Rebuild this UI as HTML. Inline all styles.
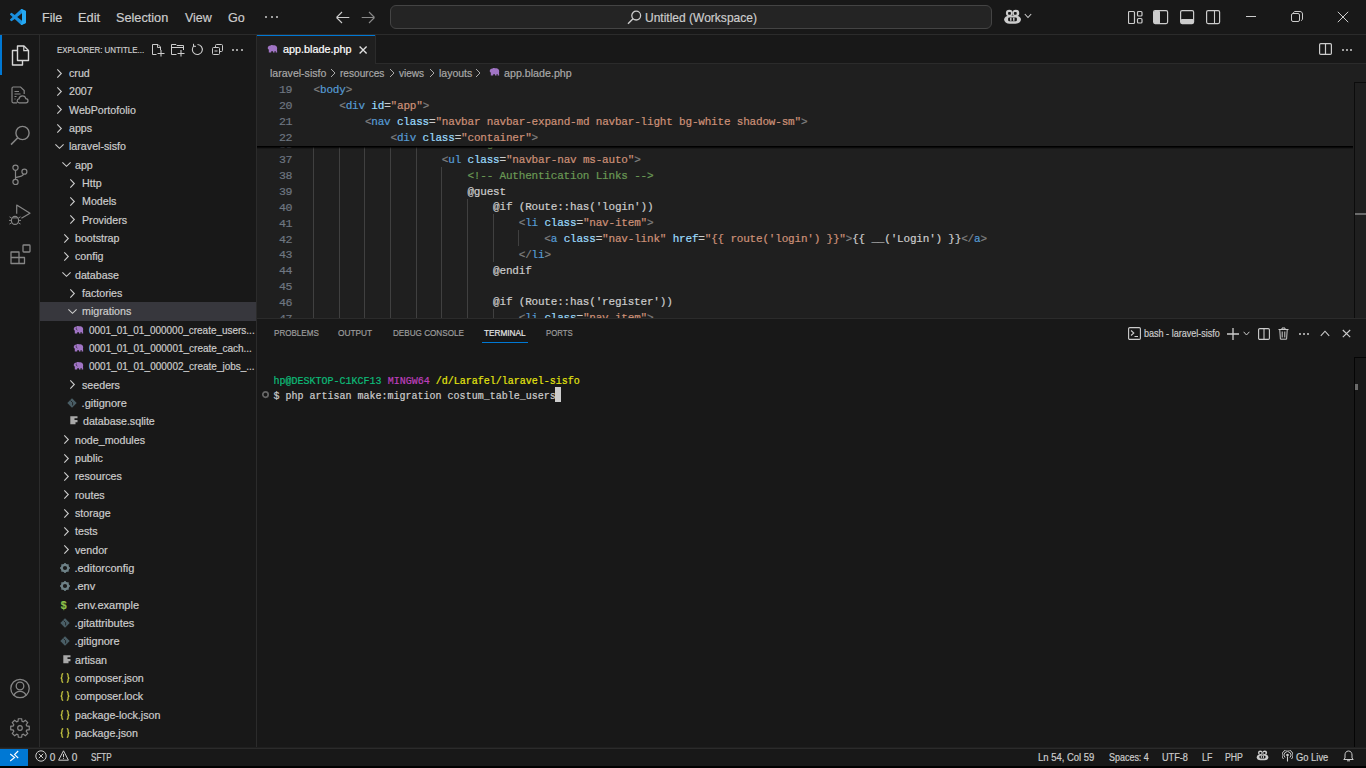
<!DOCTYPE html><html><head><meta charset="utf-8"><style>
html,body{margin:0;padding:0;width:1366px;height:768px;overflow:hidden;background:#181818;}
body>div,body>span,body>svg{position:absolute;display:block;}
span{white-space:pre;-webkit-text-stroke:0.2px currentColor;}
</style></head><body>
<div style="left:0px;top:0px;width:1366px;height:34px;background:#181818;"></div>
<div style="left:0px;top:34px;width:1366px;height:1px;background:#2b2b2b;"></div>
<svg style="left:10px;top:9px;" width="16" height="16" viewBox="0 0 100 100" fill="none"><path fill="#1a8fdd" d="M96.46 10.8L75.86.87a6.23 6.23 0 0 0-7.1 1.2L29.35 38.04 12.17 25a4.160 4.160 0 0 0-5.32.24L1.34 30.25a4.16 4.16 0 0 0 0 6.16L16.24 50 1.33 63.6a4.16 4.16 0 0 0 0 6.14l5.52 5.02a4.16 4.16 0 0 0 5.32.24l17.18-13.04L68.77 97.9a6.22 6.22 0 0 0 7.1 1.2l20.58-9.9a6.25 6.25 0 0 0 3.55-5.63V16.43a6.25 6.25 0 0 0-3.54-5.63zM75 72.72L45.1 50 75 27.28v45.44z"/><path fill="#25a9f2" d="M75.86.87a6.23 6.23 0 0 0-7.1 1.2L75 27.28v45.44L68.77 97.9a6.22 6.22 0 0 0 7.1 1.2l20.58-9.9a6.25 6.25 0 0 0 3.55-5.63V16.43a6.25 6.25 0 0 0-3.54-5.63z"/></svg>
<span style="left:42.33px;top:11.00px;font-size:13px;line-height:13px;color:#cccccc;font-family:'Liberation Sans', sans-serif;letter-spacing:0.000px;transform:scaleX(0.9687);transform-origin:0 0;">File</span>
<span style="left:77.51px;top:11.00px;font-size:13px;line-height:13px;color:#cccccc;font-family:'Liberation Sans', sans-serif;letter-spacing:0.000px;transform:scaleX(0.9867);transform-origin:0 0;">Edit</span>
<span style="left:116.00px;top:11.00px;font-size:13px;line-height:13px;color:#cccccc;font-family:'Liberation Sans', sans-serif;letter-spacing:0.000px;transform:scaleX(0.9765);transform-origin:0 0;">Selection</span>
<span style="left:184.60px;top:11.00px;font-size:13px;line-height:13px;color:#cccccc;font-family:'Liberation Sans', sans-serif;letter-spacing:0.000px;transform:scaleX(0.9596);transform-origin:0 0;">View</span>
<span style="left:227.80px;top:11.00px;font-size:13px;line-height:13px;color:#cccccc;font-family:'Liberation Sans', sans-serif;letter-spacing:0.000px;transform:scaleX(0.9642);transform-origin:0 0;">Go</span>
<div style="left:265.0px;top:16px;width:2.4px;height:2.4px;background:#cccccc;border-radius:50%;"></div>
<div style="left:270.5px;top:16px;width:2.4px;height:2.4px;background:#cccccc;border-radius:50%;"></div>
<div style="left:276.0px;top:16px;width:2.4px;height:2.4px;background:#cccccc;border-radius:50%;"></div>
<svg style="left:335px;top:10px;" width="15" height="15" viewBox="0 0 15 15" fill="none"><path d="M1.6 7.5 H14.3 M1.5 7.5 L7 2 M1.5 7.5 L7 13" stroke="#cccccc" stroke-width="1.1"/></svg>
<svg style="left:361px;top:10px;" width="15" height="15" viewBox="0 0 15 15" fill="none"><path d="M13.4 7.5 H0.7 M13.5 7.5 L8 2 M13.5 7.5 L8 13" stroke="#8a8a8a" stroke-width="1.1"/></svg>
<div style="left:390px;top:5px;width:602px;height:24px;background:#242424;box-sizing:border-box;border:1px solid #444444;border-radius:6px;"></div>
<svg style="left:627px;top:10px;" width="15" height="15" viewBox="0 0 15 15" fill="none"><circle cx="9.2" cy="5.6" r="4.4" stroke="#cccccc" stroke-width="1.3"/><path d="M6 8.8 L1 13.8" stroke="#cccccc" stroke-width="1.4"/></svg>
<span style="left:645.28px;top:10.70px;font-size:13px;line-height:13px;color:#cccccc;font-family:'Liberation Sans', sans-serif;letter-spacing:0.000px;transform:scaleX(0.9240);transform-origin:0 0;">Untitled (Workspace)</span>
<svg style="left:1003px;top:9px;" width="19" height="16" viewBox="0 0 19 16" fill="none"><ellipse cx="6.3" cy="4.1" rx="3.4" ry="3.3" fill="#cccccc"/><ellipse cx="12.85" cy="4.1" rx="3.4" ry="3.3" fill="#cccccc"/><rect x="1.1" y="6.4" width="16.9" height="8.4" rx="5.5" ry="4.2" fill="#cccccc"/><rect x="5.1" y="2.9" width="2.8" height="2.8" rx="0.8" fill="#181818"/><rect x="10.9" y="2.9" width="2.8" height="2.8" rx="0.8" fill="#181818"/><rect x="5.1" y="8.4" width="8.8" height="3.9" rx="1.2" fill="#181818"/><rect x="7.1" y="8.7" width="1.4" height="3.1" fill="#cccccc"/><rect x="10.1" y="8.7" width="1.4" height="3.1" fill="#cccccc"/></svg>
<svg style="left:1024px;top:13px;" width="8" height="6" viewBox="0 0 8 6" fill="none"><path d="M0.8 1 L4 4.5 L7.2 1" stroke="#cccccc" stroke-width="1.1"/></svg>
<svg style="left:1128px;top:10px;" width="15" height="15" viewBox="0 0 15 15" fill="none"><rect x="0.5" y="1.5" width="6" height="12" rx="1" stroke="#cccccc" stroke-width="1.2"/><rect x="9.5" y="1.5" width="4.5" height="4.5" rx="1" stroke="#cccccc" stroke-width="1.2"/><rect x="9.5" y="8.5" width="4.5" height="4.5" rx="1" stroke="#cccccc" stroke-width="1.2"/></svg>
<svg style="left:1153px;top:10px;" width="16" height="15" viewBox="0 0 16 15" fill="none"><rect x="0.6" y="0.6" width="14" height="13" rx="1.5" stroke="#cccccc" stroke-width="1.2"/><rect x="1" y="1" width="6" height="12.5" rx="0.8" fill="#cccccc"/></svg>
<svg style="left:1180px;top:10px;" width="15" height="15" viewBox="0 0 15 15" fill="none"><rect x="0.6" y="0.6" width="13" height="13" rx="1.5" stroke="#cccccc" stroke-width="1.2"/><rect x="1" y="9" width="12.5" height="4.5" rx="0.8" fill="#cccccc"/></svg>
<svg style="left:1206px;top:10px;" width="15" height="15" viewBox="0 0 15 15" fill="none"><rect x="0.6" y="0.6" width="13" height="13" rx="1.5" stroke="#cccccc" stroke-width="1.2"/><path d="M8.5 1 V13.5" stroke="#cccccc" stroke-width="1.1"/></svg>
<div style="left:1246px;top:16px;width:10px;height:1px;background:#cccccc;"></div>
<svg style="left:1291px;top:11px;" width="12" height="12" viewBox="0 0 12 12" fill="none"><rect x="0.5" y="2.5" width="8" height="8" rx="1.5" stroke="#cccccc" stroke-width="1"/><path d="M2.5 2.5 V2 C2.5 1.2 3.2 0.5 4 0.5 H9 C10.4 0.5 11.5 1.6 11.5 3 V8 C11.5 8.8 10.8 9.5 10 9.5" stroke="#cccccc" stroke-width="1"/></svg>
<svg style="left:1337px;top:11px;" width="12" height="12" viewBox="0 0 12 12" fill="none"><path d="M0.8 0.8 L11.2 11.2 M11.2 0.8 L0.8 11.2" stroke="#cccccc" stroke-width="1"/></svg>
<div style="left:0px;top:35px;width:39px;height:713px;background:#181818;"></div>
<div style="left:39px;top:35px;width:1px;height:713px;background:#2b2b2b;"></div>
<div style="left:0px;top:35px;width:2px;height:40px;background:#0078d4;"></div>
<svg style="left:11px;top:45px;" width="19" height="21" viewBox="0 0 19 21" fill="none"><path d="M6.5 1 H13 L17.5 5.5 V15.5 H6.5 Z" stroke="#d7d7d7" stroke-width="1.4" stroke-linejoin="round"/><path d="M12.8 1 V5.7 H17.5" stroke="#d7d7d7" stroke-width="1.2"/><path d="M6.5 5.5 H1.5 V20 H11.5 V15.5" stroke="#d7d7d7" stroke-width="1.4" stroke-linejoin="round"/></svg>
<svg style="left:11px;top:86px;" width="18" height="18" viewBox="0 0 18 18" fill="none"><path d="M6 16.8 H2.2 C1.5 16.8 1 16.3 1 15.6 V2.2 C1 1.5 1.5 1 2.2 1 H9.6 L13.2 4.6 V8" stroke="#868686" stroke-width="1.2"/><path d="M3.5 5.5 H8 M3.5 8 H9.5 M3.5 10.5 H5.5 M3.5 13 H4.5" stroke="#868686" stroke-width="1.1"/><path d="M8.2 16.8 C6.8 16.8 6.2 15.8 6.2 14.8 C6.2 13.7 7 12.9 8 12.9 C8.2 11 9.6 9.8 11.4 9.8 C13.2 9.8 14.5 11 14.8 12.7 C16 12.7 17 13.6 17 14.8 C17 15.9 16.1 16.8 15 16.8 Z" stroke="#868686" stroke-width="1.2"/></svg>
<svg style="left:10px;top:125px;" width="21" height="21" viewBox="0 0 21 21" fill="none"><circle cx="12.5" cy="8" r="6.6" stroke="#868686" stroke-width="1.4"/><path d="M7.8 12.8 L1 19.6" stroke="#868686" stroke-width="1.5"/></svg>
<svg style="left:12px;top:164px;" width="17" height="22" viewBox="0 0 17 22" fill="none"><circle cx="3.5" cy="3.7" r="2.6" stroke="#868686" stroke-width="1.2"/><circle cx="3.5" cy="17.9" r="2.6" stroke="#868686" stroke-width="1.2"/><circle cx="12.4" cy="7.7" r="2.5" stroke="#868686" stroke-width="1.2"/><path d="M3.5 6.3 V15.3 M3.5 13.6 L7.5 12.7 C9.8 12.2 11.2 11.5 11.6 10.1" stroke="#868686" stroke-width="1.2"/></svg>
<svg style="left:9px;top:204px;" width="22" height="22" viewBox="0 0 22 22" fill="none"><path d="M7.7 9.8 V1 L21 9.3 L12.4 14.3" stroke="#868686" stroke-width="1.2" stroke-linejoin="round"/><ellipse cx="6" cy="16.4" rx="3.6" ry="4" stroke="#868686" stroke-width="1.2"/><path d="M3.2 13.9 H8.8 M0.5 12.8 L2.6 14 M0.5 20 L2.6 18.8 M11.5 12.8 L9.4 14 M11.5 20 L9.4 18.8 M0 16.4 H2.3 M9.7 16.4 H12" stroke="#868686" stroke-width="1"/></svg>
<svg style="left:10px;top:244px;" width="21" height="21" viewBox="0 0 21 21" fill="none"><path d="M1 8 H9 V19.5 H1 Z M1 13.5 H14.5 V19.5 H9" stroke="#868686" stroke-width="1.3" stroke-linejoin="round"/><rect x="13" y="1" width="7" height="7" rx="0.8" stroke="#868686" stroke-width="1.3"/></svg>
<svg style="left:10px;top:678px;" width="20" height="21" viewBox="0 0 20 21" fill="none"><circle cx="10" cy="10.5" r="9.2" stroke="#868686" stroke-width="1.3"/><circle cx="10" cy="8" r="3.8" stroke="#868686" stroke-width="1.3"/><path d="M3.8 17.5 C5 14.5 7.2 13.3 10 13.3 C12.8 13.3 15 14.5 16.2 17.5" stroke="#868686" stroke-width="1.3"/></svg>
<svg style="left:10px;top:718px;" width="20" height="20" viewBox="0 0 20 20" fill="none"><path d="M7.95 3.31 L8.37 0.74 L11.63 0.74 L12.05 3.31 L13.29 3.82 L15.39 2.30 L17.70 4.61 L16.18 6.71 L16.69 7.95 L19.26 8.37 L19.26 11.63 L16.69 12.05 L16.18 13.29 L17.70 15.39 L15.39 17.70 L13.29 16.18 L12.05 16.69 L11.63 19.26 L8.37 19.26 L7.95 16.69 L6.71 16.18 L4.61 17.70 L2.30 15.39 L3.82 13.29 L3.31 12.05 L0.74 11.63 L0.74 8.37 L3.31 7.95 L3.82 6.71 L2.30 4.61 L4.61 2.30 L6.71 3.82 Z" stroke="#868686" stroke-width="1.2" stroke-linejoin="miter"/><circle cx="10" cy="10" r="2.3" stroke="#868686" stroke-width="1.2"/></svg>
<div style="left:40px;top:35px;width:216px;height:713px;background:#181818;"></div>
<div style="left:256px;top:35px;width:1px;height:713px;background:#2b2b2b;"></div>
<span style="left:57.00px;top:44.96px;font-size:9.5px;line-height:9.5px;color:#cccccc;font-family:'Liberation Sans', sans-serif;letter-spacing:0.000px;transform:scaleX(0.8336);transform-origin:0 0;">EXPLORER: UNTITLE...</span>
<svg style="left:151px;top:43px;" width="15" height="15" viewBox="0 0 15 15" fill="none"><path d="M5.5 11.5 H1.5 V1.5 H7 L9.5 4 V7" stroke="#cccccc" stroke-width="1"/><path d="M6.5 1.8 V4.5 H9.3" stroke="#cccccc" stroke-width="0.9"/><path d="M6.5 10.5 H13.5 M10 7 V13.5" stroke="#cccccc" stroke-width="1.1"/></svg>
<svg style="left:170px;top:43px;" width="15" height="15" viewBox="0 0 15 15" fill="none"><path d="M6.5 11.5 H1.5 V1.5 H6 L7 2.5 H13.5 V7" stroke="#cccccc" stroke-width="1"/><path d="M1.5 4.5 H13.5" stroke="#cccccc" stroke-width="1"/><path d="M7.5 10.5 H14.5 M11 7 V13.5" stroke="#cccccc" stroke-width="1.1"/></svg>
<svg style="left:191px;top:43px;" width="13" height="13" viewBox="0 0 13 13" fill="none"><path d="M3.2 2.6 A5 5 0 1 0 6.5 1.5" stroke="#cccccc" stroke-width="1.1"/><path d="M2.5 0.8 V3.3 H5" stroke="#cccccc" stroke-width="1"/></svg>
<svg style="left:211px;top:43px;" width="13" height="13" viewBox="0 0 13 13" fill="none"><rect x="1.5" y="4.5" width="7" height="7" rx="1" stroke="#cccccc" stroke-width="1"/><path d="M4.5 4.2 V2.5 C4.5 1.9 4.9 1.5 5.5 1.5 H10.5 C11.1 1.5 11.5 1.9 11.5 2.5 V7.5 C11.5 8.1 11.1 8.5 10.5 8.5 H8.8" stroke="#cccccc" stroke-width="1"/><path d="M3.5 8 H6.5" stroke="#cccccc" stroke-width="1"/></svg>
<div style="left:232.0px;top:48.5px;width:2px;height:2px;background:#cccccc;border-radius:50%;"></div>
<div style="left:236.4px;top:48.5px;width:2px;height:2px;background:#cccccc;border-radius:50%;"></div>
<div style="left:240.8px;top:48.5px;width:2px;height:2px;background:#cccccc;border-radius:50%;"></div>
<svg style="left:56.0px;top:67.6665px;" width="7" height="11" viewBox="0 0 7 11" fill="none"><path d="M1.3 1.4 L5.3 5.5 L1.3 9.6" stroke="#cccccc" stroke-width="1.1"/></svg>
<span style="left:68.80px;top:68.16px;font-size:11px;line-height:11px;color:#cccccc;font-family:'Liberation Sans', sans-serif;letter-spacing:0.000px;transform:scaleX(0.9700);transform-origin:0 0;">crud</span>
<svg style="left:56.0px;top:85.9995px;" width="7" height="11" viewBox="0 0 7 11" fill="none"><path d="M1.3 1.4 L5.3 5.5 L1.3 9.6" stroke="#cccccc" stroke-width="1.1"/></svg>
<span style="left:68.80px;top:86.49px;font-size:11px;line-height:11px;color:#cccccc;font-family:'Liberation Sans', sans-serif;letter-spacing:0.000px;transform:scaleX(0.9700);transform-origin:0 0;">2007</span>
<svg style="left:56.0px;top:104.3325px;" width="7" height="11" viewBox="0 0 7 11" fill="none"><path d="M1.3 1.4 L5.3 5.5 L1.3 9.6" stroke="#cccccc" stroke-width="1.1"/></svg>
<span style="left:68.80px;top:104.82px;font-size:11px;line-height:11px;color:#cccccc;font-family:'Liberation Sans', sans-serif;letter-spacing:0.000px;transform:scaleX(0.9700);transform-origin:0 0;">WebPortofolio</span>
<svg style="left:56.0px;top:122.66550000000001px;" width="7" height="11" viewBox="0 0 7 11" fill="none"><path d="M1.3 1.4 L5.3 5.5 L1.3 9.6" stroke="#cccccc" stroke-width="1.1"/></svg>
<span style="left:68.80px;top:123.15px;font-size:11px;line-height:11px;color:#cccccc;font-family:'Liberation Sans', sans-serif;letter-spacing:0.000px;transform:scaleX(0.9700);transform-origin:0 0;">apps</span>
<svg style="left:54.0px;top:142.99849999999998px;" width="11" height="7" viewBox="0 0 11 7" fill="none"><path d="M1.4 1.3 L5.5 5.3 L9.6 1.3" stroke="#cccccc" stroke-width="1.1"/></svg>
<span style="left:68.80px;top:141.49px;font-size:11px;line-height:11px;color:#cccccc;font-family:'Liberation Sans', sans-serif;letter-spacing:0.000px;transform:scaleX(0.9700);transform-origin:0 0;">laravel-sisfo</span>
<svg style="left:60.67px;top:161.3315px;" width="11" height="7" viewBox="0 0 11 7" fill="none"><path d="M1.4 1.3 L5.5 5.3 L9.6 1.3" stroke="#cccccc" stroke-width="1.1"/></svg>
<span style="left:75.47px;top:159.82px;font-size:11px;line-height:11px;color:#cccccc;font-family:'Liberation Sans', sans-serif;letter-spacing:0.000px;transform:scaleX(0.9700);transform-origin:0 0;">app</span>
<svg style="left:69.34px;top:177.66449999999998px;" width="7" height="11" viewBox="0 0 7 11" fill="none"><path d="M1.3 1.4 L5.3 5.5 L1.3 9.6" stroke="#cccccc" stroke-width="1.1"/></svg>
<span style="left:82.14px;top:178.15px;font-size:11px;line-height:11px;color:#cccccc;font-family:'Liberation Sans', sans-serif;letter-spacing:0.000px;transform:scaleX(0.9700);transform-origin:0 0;">Http</span>
<svg style="left:69.34px;top:195.9975px;" width="7" height="11" viewBox="0 0 7 11" fill="none"><path d="M1.3 1.4 L5.3 5.5 L1.3 9.6" stroke="#cccccc" stroke-width="1.1"/></svg>
<span style="left:82.14px;top:196.49px;font-size:11px;line-height:11px;color:#cccccc;font-family:'Liberation Sans', sans-serif;letter-spacing:0.000px;transform:scaleX(0.9700);transform-origin:0 0;">Models</span>
<svg style="left:69.34px;top:214.33049999999997px;" width="7" height="11" viewBox="0 0 7 11" fill="none"><path d="M1.3 1.4 L5.3 5.5 L1.3 9.6" stroke="#cccccc" stroke-width="1.1"/></svg>
<span style="left:82.14px;top:214.82px;font-size:11px;line-height:11px;color:#cccccc;font-family:'Liberation Sans', sans-serif;letter-spacing:0.000px;transform:scaleX(0.9700);transform-origin:0 0;">Providers</span>
<svg style="left:62.67px;top:232.6635px;" width="7" height="11" viewBox="0 0 7 11" fill="none"><path d="M1.3 1.4 L5.3 5.5 L1.3 9.6" stroke="#cccccc" stroke-width="1.1"/></svg>
<span style="left:75.47px;top:233.15px;font-size:11px;line-height:11px;color:#cccccc;font-family:'Liberation Sans', sans-serif;letter-spacing:0.000px;transform:scaleX(0.9700);transform-origin:0 0;">bootstrap</span>
<svg style="left:62.67px;top:250.99649999999997px;" width="7" height="11" viewBox="0 0 7 11" fill="none"><path d="M1.3 1.4 L5.3 5.5 L1.3 9.6" stroke="#cccccc" stroke-width="1.1"/></svg>
<span style="left:75.47px;top:251.48px;font-size:11px;line-height:11px;color:#cccccc;font-family:'Liberation Sans', sans-serif;letter-spacing:0.000px;transform:scaleX(0.9700);transform-origin:0 0;">config</span>
<svg style="left:60.67px;top:271.3295px;" width="11" height="7" viewBox="0 0 11 7" fill="none"><path d="M1.4 1.3 L5.5 5.3 L9.6 1.3" stroke="#cccccc" stroke-width="1.1"/></svg>
<span style="left:75.47px;top:269.82px;font-size:11px;line-height:11px;color:#cccccc;font-family:'Liberation Sans', sans-serif;letter-spacing:0.000px;transform:scaleX(0.9700);transform-origin:0 0;">database</span>
<svg style="left:69.34px;top:287.66249999999997px;" width="7" height="11" viewBox="0 0 7 11" fill="none"><path d="M1.3 1.4 L5.3 5.5 L1.3 9.6" stroke="#cccccc" stroke-width="1.1"/></svg>
<span style="left:82.14px;top:288.15px;font-size:11px;line-height:11px;color:#cccccc;font-family:'Liberation Sans', sans-serif;letter-spacing:0.000px;transform:scaleX(0.9700);transform-origin:0 0;">factories</span>
<div style="left:40px;top:302px;width:216px;height:19px;background:#37373d;"></div>
<svg style="left:67.34px;top:307.99549999999994px;" width="11" height="7" viewBox="0 0 11 7" fill="none"><path d="M1.4 1.3 L5.5 5.3 L9.6 1.3" stroke="#cccccc" stroke-width="1.1"/></svg>
<span style="left:82.14px;top:306.48px;font-size:11px;line-height:11px;color:#cccccc;font-family:'Liberation Sans', sans-serif;letter-spacing:0.000px;transform:scaleX(0.9700);transform-origin:0 0;">migrations</span>
<svg style="left:72.6px;top:325.82849999999996px;" width="11" height="8" viewBox="0 0 11 8" fill="none"><path d="M1.8 7.6 V4.5 C0.9 4 0.6 3.2 0.8 2.4 C1.1 1 2.3 0.3 3.6 0.4 C4.3 0.1 5 0 5.8 0.2 C7 0 8.6 0.2 9.4 1.2 C10.2 2.1 10.3 3.5 10 4.6 L10.2 7.6 H8.6 V6 H7.6 V7.6 H6 V6.2 H4.2 V7.6 H3 Z" fill="#a074c4"/><path d="M3.4 1.6 C3 2.6 3.4 3.8 4.4 4.2" stroke="#181818" stroke-width="0.6"/></svg>
<span style="left:88.80px;top:324.82px;font-size:11px;line-height:11px;color:#cccccc;font-family:'Liberation Sans', sans-serif;letter-spacing:0.000px;transform:scaleX(0.9058);transform-origin:0 0;">0001_01_01_000000_create_users...</span>
<svg style="left:72.6px;top:344.1615px;" width="11" height="8" viewBox="0 0 11 8" fill="none"><path d="M1.8 7.6 V4.5 C0.9 4 0.6 3.2 0.8 2.4 C1.1 1 2.3 0.3 3.6 0.4 C4.3 0.1 5 0 5.8 0.2 C7 0 8.6 0.2 9.4 1.2 C10.2 2.1 10.3 3.5 10 4.6 L10.2 7.6 H8.6 V6 H7.6 V7.6 H6 V6.2 H4.2 V7.6 H3 Z" fill="#a074c4"/><path d="M3.4 1.6 C3 2.6 3.4 3.8 4.4 4.2" stroke="#181818" stroke-width="0.6"/></svg>
<span style="left:88.80px;top:343.15px;font-size:11px;line-height:11px;color:#cccccc;font-family:'Liberation Sans', sans-serif;letter-spacing:0.000px;transform:scaleX(0.9087);transform-origin:0 0;">0001_01_01_000001_create_cach...</span>
<svg style="left:72.6px;top:362.49449999999996px;" width="11" height="8" viewBox="0 0 11 8" fill="none"><path d="M1.8 7.6 V4.5 C0.9 4 0.6 3.2 0.8 2.4 C1.1 1 2.3 0.3 3.6 0.4 C4.3 0.1 5 0 5.8 0.2 C7 0 8.6 0.2 9.4 1.2 C10.2 2.1 10.3 3.5 10 4.6 L10.2 7.6 H8.6 V6 H7.6 V7.6 H6 V6.2 H4.2 V7.6 H3 Z" fill="#a074c4"/><path d="M3.4 1.6 C3 2.6 3.4 3.8 4.4 4.2" stroke="#181818" stroke-width="0.6"/></svg>
<span style="left:88.80px;top:361.48px;font-size:11px;line-height:11px;color:#cccccc;font-family:'Liberation Sans', sans-serif;letter-spacing:0.000px;transform:scaleX(0.9088);transform-origin:0 0;">0001_01_01_000002_create_jobs_...</span>
<svg style="left:69.34px;top:379.32749999999993px;" width="7" height="11" viewBox="0 0 7 11" fill="none"><path d="M1.3 1.4 L5.3 5.5 L1.3 9.6" stroke="#cccccc" stroke-width="1.1"/></svg>
<span style="left:82.14px;top:379.82px;font-size:11px;line-height:11px;color:#cccccc;font-family:'Liberation Sans', sans-serif;letter-spacing:0.000px;transform:scaleX(0.9700);transform-origin:0 0;">seeders</span>
<svg style="left:67.2px;top:398.16049999999996px;" width="10" height="10" viewBox="0 0 10 10" fill="none"><path d="M5 0.3 L9.7 5 L5 9.7 L0.3 5 Z" fill="#4a5e66"/><path d="M3.6 2.6 L5.6 4.6 V7.4" stroke="#181818" stroke-width="0.8"/></svg>
<span style="left:81.60px;top:398.15px;font-size:11px;line-height:11px;color:#cccccc;font-family:'Liberation Sans', sans-serif;letter-spacing:0.000px;transform:scaleX(1.0000);transform-origin:0 0;">.gitignore</span>
<svg style="left:69.7px;top:416px;" width="8" height="9" viewBox="0 0 8 9" fill="none"><path d="M0.3 0.3 H7.5 V2.3 H4.5 V4 H7.5 V6.2 H5.5 V8.3 H0.3 Z" fill="#a8a8a8"/></svg>
<span style="left:82.60px;top:416.48px;font-size:11px;line-height:11px;color:#cccccc;font-family:'Liberation Sans', sans-serif;letter-spacing:0.000px;transform:scaleX(0.9700);transform-origin:0 0;">database.sqlite</span>
<svg style="left:62.67px;top:434.32649999999995px;" width="7" height="11" viewBox="0 0 7 11" fill="none"><path d="M1.3 1.4 L5.3 5.5 L1.3 9.6" stroke="#cccccc" stroke-width="1.1"/></svg>
<span style="left:75.47px;top:434.81px;font-size:11px;line-height:11px;color:#cccccc;font-family:'Liberation Sans', sans-serif;letter-spacing:0.000px;transform:scaleX(0.9700);transform-origin:0 0;">node_modules</span>
<svg style="left:62.67px;top:452.6594999999999px;" width="7" height="11" viewBox="0 0 7 11" fill="none"><path d="M1.3 1.4 L5.3 5.5 L1.3 9.6" stroke="#cccccc" stroke-width="1.1"/></svg>
<span style="left:75.47px;top:453.15px;font-size:11px;line-height:11px;color:#cccccc;font-family:'Liberation Sans', sans-serif;letter-spacing:0.000px;transform:scaleX(0.9700);transform-origin:0 0;">public</span>
<svg style="left:62.67px;top:470.99249999999995px;" width="7" height="11" viewBox="0 0 7 11" fill="none"><path d="M1.3 1.4 L5.3 5.5 L1.3 9.6" stroke="#cccccc" stroke-width="1.1"/></svg>
<span style="left:75.47px;top:471.48px;font-size:11px;line-height:11px;color:#cccccc;font-family:'Liberation Sans', sans-serif;letter-spacing:0.000px;transform:scaleX(0.9700);transform-origin:0 0;">resources</span>
<svg style="left:62.67px;top:489.3255px;" width="7" height="11" viewBox="0 0 7 11" fill="none"><path d="M1.3 1.4 L5.3 5.5 L1.3 9.6" stroke="#cccccc" stroke-width="1.1"/></svg>
<span style="left:75.47px;top:489.81px;font-size:11px;line-height:11px;color:#cccccc;font-family:'Liberation Sans', sans-serif;letter-spacing:0.000px;transform:scaleX(0.9700);transform-origin:0 0;">routes</span>
<svg style="left:62.67px;top:507.6585px;" width="7" height="11" viewBox="0 0 7 11" fill="none"><path d="M1.3 1.4 L5.3 5.5 L1.3 9.6" stroke="#cccccc" stroke-width="1.1"/></svg>
<span style="left:75.47px;top:508.15px;font-size:11px;line-height:11px;color:#cccccc;font-family:'Liberation Sans', sans-serif;letter-spacing:0.000px;transform:scaleX(0.9700);transform-origin:0 0;">storage</span>
<svg style="left:62.67px;top:525.9915px;" width="7" height="11" viewBox="0 0 7 11" fill="none"><path d="M1.3 1.4 L5.3 5.5 L1.3 9.6" stroke="#cccccc" stroke-width="1.1"/></svg>
<span style="left:75.47px;top:526.48px;font-size:11px;line-height:11px;color:#cccccc;font-family:'Liberation Sans', sans-serif;letter-spacing:0.000px;transform:scaleX(0.9700);transform-origin:0 0;">tests</span>
<svg style="left:62.67px;top:544.3245px;" width="7" height="11" viewBox="0 0 7 11" fill="none"><path d="M1.3 1.4 L5.3 5.5 L1.3 9.6" stroke="#cccccc" stroke-width="1.1"/></svg>
<span style="left:75.47px;top:544.81px;font-size:11px;line-height:11px;color:#cccccc;font-family:'Liberation Sans', sans-serif;letter-spacing:0.000px;transform:scaleX(0.9700);transform-origin:0 0;">vendor</span>
<svg style="left:59.8px;top:563.1575px;" width="10" height="10" viewBox="0 0 10 10" fill="none"><circle cx="5" cy="5" r="3.2" stroke="#6d8086" stroke-width="2.2"/><path d="M5 0 V2 M5 8 V10 M0 5 H2 M8 5 H10 M1.5 1.5 L2.8 2.8 M7.2 7.2 L8.5 8.5 M8.5 1.5 L7.2 2.8 M1.5 8.5 L2.8 7.2" stroke="#6d8086" stroke-width="1.6"/></svg>
<span style="left:74.40px;top:563.15px;font-size:11px;line-height:11px;color:#cccccc;font-family:'Liberation Sans', sans-serif;letter-spacing:0.000px;transform:scaleX(1.0000);transform-origin:0 0;">.editorconfig</span>
<svg style="left:59.8px;top:581.4905px;" width="10" height="10" viewBox="0 0 10 10" fill="none"><circle cx="5" cy="5" r="3.2" stroke="#6d8086" stroke-width="2.2"/><path d="M5 0 V2 M5 8 V10 M0 5 H2 M8 5 H10 M1.5 1.5 L2.8 2.8 M7.2 7.2 L8.5 8.5 M8.5 1.5 L7.2 2.8 M1.5 8.5 L2.8 7.2" stroke="#6d8086" stroke-width="1.6"/></svg>
<span style="left:74.40px;top:581.48px;font-size:11px;line-height:11px;color:#cccccc;font-family:'Liberation Sans', sans-serif;letter-spacing:0.000px;transform:scaleX(1.0000);transform-origin:0 0;">.env</span>
<span style="left:60.80px;top:599.54px;font-size:10.5px;line-height:10.5px;color:#8dc149;font-family:'Liberation Sans', sans-serif;letter-spacing:0.000px;font-weight:bold;">$</span>
<span style="left:74.40px;top:599.81px;font-size:11px;line-height:11px;color:#cccccc;font-family:'Liberation Sans', sans-serif;letter-spacing:0.000px;transform:scaleX(1.0000);transform-origin:0 0;">.env.example</span>
<svg style="left:60.0px;top:618.1565px;" width="10" height="10" viewBox="0 0 10 10" fill="none"><path d="M5 0.3 L9.7 5 L5 9.7 L0.3 5 Z" fill="#4a5e66"/><path d="M3.6 2.6 L5.6 4.6 V7.4" stroke="#181818" stroke-width="0.8"/></svg>
<span style="left:74.40px;top:618.14px;font-size:11px;line-height:11px;color:#cccccc;font-family:'Liberation Sans', sans-serif;letter-spacing:0.000px;transform:scaleX(1.0000);transform-origin:0 0;">.gitattributes</span>
<svg style="left:60.0px;top:636.4895px;" width="10" height="10" viewBox="0 0 10 10" fill="none"><path d="M5 0.3 L9.7 5 L5 9.7 L0.3 5 Z" fill="#4a5e66"/><path d="M3.6 2.6 L5.6 4.6 V7.4" stroke="#181818" stroke-width="0.8"/></svg>
<span style="left:74.40px;top:636.48px;font-size:11px;line-height:11px;color:#cccccc;font-family:'Liberation Sans', sans-serif;letter-spacing:0.000px;transform:scaleX(1.0000);transform-origin:0 0;">.gitignore</span>
<svg style="left:62.5px;top:655px;" width="8" height="9" viewBox="0 0 8 9" fill="none"><path d="M0.3 0.3 H7.5 V2.3 H4.5 V4 H7.5 V6.2 H5.5 V8.3 H0.3 Z" fill="#a8a8a8"/></svg>
<span style="left:75.40px;top:654.81px;font-size:11px;line-height:11px;color:#cccccc;font-family:'Liberation Sans', sans-serif;letter-spacing:0.000px;transform:scaleX(0.9700);transform-origin:0 0;">artisan</span>
<svg style="left:60px;top:673px;" width="10" height="10" viewBox="0 0 10 10" fill="none"><path d="M3.2 0.6 C2.1 0.6 1.9 1.2 1.9 2.2 V3.8 C1.9 4.6 1.3 5 0.6 5 C1.3 5 1.9 5.4 1.9 6.2 V7.8 C1.9 8.8 2.1 9.4 3.2 9.4 M6.8 0.6 C7.9 0.6 8.1 1.2 8.1 2.2 V3.8 C8.1 4.6 8.7 5 9.4 5 C8.7 5 8.1 5.4 8.1 6.2 V7.8 C8.1 8.8 7.9 9.4 6.8 9.4" stroke="#cbcb41" stroke-width="1.25"/></svg>
<span style="left:75.40px;top:673.14px;font-size:11px;line-height:11px;color:#cccccc;font-family:'Liberation Sans', sans-serif;letter-spacing:0.000px;transform:scaleX(0.9700);transform-origin:0 0;">composer.json</span>
<svg style="left:60px;top:691px;" width="10" height="10" viewBox="0 0 10 10" fill="none"><path d="M3.2 0.6 C2.1 0.6 1.9 1.2 1.9 2.2 V3.8 C1.9 4.6 1.3 5 0.6 5 C1.3 5 1.9 5.4 1.9 6.2 V7.8 C1.9 8.8 2.1 9.4 3.2 9.4 M6.8 0.6 C7.9 0.6 8.1 1.2 8.1 2.2 V3.8 C8.1 4.6 8.7 5 9.4 5 C8.7 5 8.1 5.4 8.1 6.2 V7.8 C8.1 8.8 7.9 9.4 6.8 9.4" stroke="#cbcb41" stroke-width="1.25"/></svg>
<span style="left:75.40px;top:691.48px;font-size:11px;line-height:11px;color:#cccccc;font-family:'Liberation Sans', sans-serif;letter-spacing:0.000px;transform:scaleX(0.9700);transform-origin:0 0;">composer.lock</span>
<svg style="left:60px;top:710px;" width="10" height="10" viewBox="0 0 10 10" fill="none"><path d="M3.2 0.6 C2.1 0.6 1.9 1.2 1.9 2.2 V3.8 C1.9 4.6 1.3 5 0.6 5 C1.3 5 1.9 5.4 1.9 6.2 V7.8 C1.9 8.8 2.1 9.4 3.2 9.4 M6.8 0.6 C7.9 0.6 8.1 1.2 8.1 2.2 V3.8 C8.1 4.6 8.7 5 9.4 5 C8.7 5 8.1 5.4 8.1 6.2 V7.8 C8.1 8.8 7.9 9.4 6.8 9.4" stroke="#cbcb41" stroke-width="1.25"/></svg>
<span style="left:75.40px;top:709.81px;font-size:11px;line-height:11px;color:#cccccc;font-family:'Liberation Sans', sans-serif;letter-spacing:0.000px;transform:scaleX(0.9700);transform-origin:0 0;">package-lock.json</span>
<svg style="left:60px;top:728px;" width="10" height="10" viewBox="0 0 10 10" fill="none"><path d="M3.2 0.6 C2.1 0.6 1.9 1.2 1.9 2.2 V3.8 C1.9 4.6 1.3 5 0.6 5 C1.3 5 1.9 5.4 1.9 6.2 V7.8 C1.9 8.8 2.1 9.4 3.2 9.4 M6.8 0.6 C7.9 0.6 8.1 1.2 8.1 2.2 V3.8 C8.1 4.6 8.7 5 9.4 5 C8.7 5 8.1 5.4 8.1 6.2 V7.8 C8.1 8.8 7.9 9.4 6.8 9.4" stroke="#cbcb41" stroke-width="1.25"/></svg>
<span style="left:75.40px;top:728.14px;font-size:11px;line-height:11px;color:#cccccc;font-family:'Liberation Sans', sans-serif;letter-spacing:0.000px;transform:scaleX(0.9700);transform-origin:0 0;">package.json</span>
<div style="left:257px;top:35px;width:1109px;height:28px;background:#181818;"></div>
<div style="left:257px;top:63px;width:1109px;height:1px;background:#2b2b2b;"></div>
<div style="left:257px;top:35px;width:118px;height:29px;background:#1f1f1f;"></div>
<div style="left:257px;top:35px;width:118px;height:1px;background:#0078d4;"></div>
<div style="left:375px;top:35px;width:1px;height:28px;background:#2b2b2b;"></div>
<svg style="left:267px;top:45px;" width="11" height="8" viewBox="0 0 11 8" fill="none"><path d="M1.8 7.6 V4.5 C0.9 4 0.6 3.2 0.8 2.4 C1.1 1 2.3 0.3 3.6 0.4 C4.3 0.1 5 0 5.8 0.2 C7 0 8.6 0.2 9.4 1.2 C10.2 2.1 10.3 3.5 10 4.6 L10.2 7.6 H8.6 V6 H7.6 V7.6 H6 V6.2 H4.2 V7.6 H3 Z" fill="#a074c4"/></svg>
<span style="left:283.30px;top:44.09px;font-size:11px;line-height:11px;color:#ffffff;font-family:'Liberation Sans', sans-serif;letter-spacing:0.000px;transform:scaleX(0.9840);transform-origin:0 0;">app.blade.php</span>
<svg style="left:359px;top:46px;" width="9" height="8" viewBox="0 0 9 8" fill="none"><path d="M0.6 0.6 L7.6 7.4 M7.6 0.6 L0.6 7.4" stroke="#e0e0e0" stroke-width="1.35"/></svg>
<svg style="left:1319px;top:43px;" width="13" height="12" viewBox="0 0 13 12" fill="none"><rect x="0.6" y="0.6" width="11.8" height="10.8" rx="1.2" stroke="#cccccc" stroke-width="1.2"/><path d="M6.5 1 V11" stroke="#cccccc" stroke-width="1.2"/></svg>
<div style="left:1341.5px;top:48.5px;width:2px;height:2px;background:#cccccc;border-radius:50%;"></div>
<div style="left:1345.7px;top:48.5px;width:2px;height:2px;background:#cccccc;border-radius:50%;"></div>
<div style="left:1349.9px;top:48.5px;width:2px;height:2px;background:#cccccc;border-radius:50%;"></div>
<div style="left:257px;top:64px;width:1109px;height:254px;background:#1f1f1f;"></div>
<span style="left:270.20px;top:68.29px;font-size:11px;line-height:11px;color:#a9a9a9;font-family:'Liberation Sans', sans-serif;letter-spacing:0.000px;transform:scaleX(0.9596);transform-origin:0 0;">laravel-sisfo</span>
<span style="left:340.10px;top:68.29px;font-size:11px;line-height:11px;color:#a9a9a9;font-family:'Liberation Sans', sans-serif;letter-spacing:0.000px;transform:scaleX(0.9181);transform-origin:0 0;">resources</span>
<span style="left:399.00px;top:68.29px;font-size:11px;line-height:11px;color:#a9a9a9;font-family:'Liberation Sans', sans-serif;letter-spacing:0.000px;transform:scaleX(0.9105);transform-origin:0 0;">views</span>
<span style="left:438.50px;top:68.29px;font-size:11px;line-height:11px;color:#a9a9a9;font-family:'Liberation Sans', sans-serif;letter-spacing:0.000px;transform:scaleX(0.9532);transform-origin:0 0;">layouts</span>
<svg style="left:329.9px;top:68.3px;" width="6" height="10" viewBox="0 0 6 10" fill="none"><path d="M1 1 L5 5 L1 9" stroke="#a9a9a9" stroke-width="1"/></svg>
<svg style="left:389.1px;top:68.3px;" width="6" height="10" viewBox="0 0 6 10" fill="none"><path d="M1 1 L5 5 L1 9" stroke="#a9a9a9" stroke-width="1"/></svg>
<svg style="left:428.6px;top:68.3px;" width="6" height="10" viewBox="0 0 6 10" fill="none"><path d="M1 1 L5 5 L1 9" stroke="#a9a9a9" stroke-width="1"/></svg>
<svg style="left:474.9px;top:68.3px;" width="6" height="10" viewBox="0 0 6 10" fill="none"><path d="M1 1 L5 5 L1 9" stroke="#a9a9a9" stroke-width="1"/></svg>
<svg style="left:489px;top:68px;" width="11" height="8" viewBox="0 0 11 8" fill="none"><path d="M1.8 7.6 V4.5 C0.9 4 0.6 3.2 0.8 2.4 C1.1 1 2.3 0.3 3.6 0.4 C4.3 0.1 5 0 5.8 0.2 C7 0 8.6 0.2 9.4 1.2 C10.2 2.1 10.3 3.5 10 4.6 L10.2 7.6 H8.6 V6 H7.6 V7.6 H6 V6.2 H4.2 V7.6 H3 Z" fill="#a074c4"/></svg>
<span style="left:504.10px;top:68.29px;font-size:11px;line-height:11px;color:#a9a9a9;font-family:'Liberation Sans', sans-serif;letter-spacing:0.000px;transform:scaleX(0.9711);transform-origin:0 0;">app.blade.php</span>
<div style="left:313px;top:135px;width:1px;height:16px;background:#404040;"></div>
<div style="left:339px;top:135px;width:1px;height:16px;background:#404040;"></div>
<div style="left:364px;top:135px;width:1px;height:16px;background:#404040;"></div>
<div style="left:390px;top:135px;width:1px;height:16px;background:#404040;"></div>
<div style="left:416px;top:135px;width:1px;height:16px;background:#404040;"></div>
<div style="left:313px;top:151px;width:1px;height:16px;background:#404040;"></div>
<div style="left:339px;top:151px;width:1px;height:16px;background:#404040;"></div>
<div style="left:364px;top:151px;width:1px;height:16px;background:#404040;"></div>
<div style="left:390px;top:151px;width:1px;height:16px;background:#404040;"></div>
<div style="left:416px;top:151px;width:1px;height:16px;background:#404040;"></div>
<div style="left:313px;top:167px;width:1px;height:16px;background:#404040;"></div>
<div style="left:339px;top:167px;width:1px;height:16px;background:#404040;"></div>
<div style="left:364px;top:167px;width:1px;height:16px;background:#404040;"></div>
<div style="left:390px;top:167px;width:1px;height:16px;background:#404040;"></div>
<div style="left:416px;top:167px;width:1px;height:16px;background:#404040;"></div>
<div style="left:441px;top:167px;width:1px;height:16px;background:#404040;"></div>
<div style="left:313px;top:183px;width:1px;height:16px;background:#404040;"></div>
<div style="left:339px;top:183px;width:1px;height:16px;background:#404040;"></div>
<div style="left:364px;top:183px;width:1px;height:16px;background:#404040;"></div>
<div style="left:390px;top:183px;width:1px;height:16px;background:#404040;"></div>
<div style="left:416px;top:183px;width:1px;height:16px;background:#404040;"></div>
<div style="left:441px;top:183px;width:1px;height:16px;background:#404040;"></div>
<div style="left:313px;top:199px;width:1px;height:15px;background:#404040;"></div>
<div style="left:339px;top:199px;width:1px;height:15px;background:#404040;"></div>
<div style="left:364px;top:199px;width:1px;height:15px;background:#404040;"></div>
<div style="left:390px;top:199px;width:1px;height:15px;background:#404040;"></div>
<div style="left:416px;top:199px;width:1px;height:15px;background:#404040;"></div>
<div style="left:441px;top:199px;width:1px;height:15px;background:#404040;"></div>
<div style="left:467px;top:199px;width:1px;height:15px;background:#404040;"></div>
<div style="left:313px;top:214px;width:1px;height:16px;background:#404040;"></div>
<div style="left:339px;top:214px;width:1px;height:16px;background:#404040;"></div>
<div style="left:364px;top:214px;width:1px;height:16px;background:#404040;"></div>
<div style="left:390px;top:214px;width:1px;height:16px;background:#404040;"></div>
<div style="left:416px;top:214px;width:1px;height:16px;background:#404040;"></div>
<div style="left:441px;top:214px;width:1px;height:16px;background:#404040;"></div>
<div style="left:467px;top:214px;width:1px;height:16px;background:#404040;"></div>
<div style="left:493px;top:214px;width:1px;height:16px;background:#404040;"></div>
<div style="left:313px;top:230px;width:1px;height:16px;background:#404040;"></div>
<div style="left:339px;top:230px;width:1px;height:16px;background:#404040;"></div>
<div style="left:364px;top:230px;width:1px;height:16px;background:#404040;"></div>
<div style="left:390px;top:230px;width:1px;height:16px;background:#404040;"></div>
<div style="left:416px;top:230px;width:1px;height:16px;background:#404040;"></div>
<div style="left:441px;top:230px;width:1px;height:16px;background:#404040;"></div>
<div style="left:467px;top:230px;width:1px;height:16px;background:#404040;"></div>
<div style="left:493px;top:230px;width:1px;height:16px;background:#404040;"></div>
<div style="left:518px;top:230px;width:1px;height:16px;background:#404040;"></div>
<div style="left:313px;top:246px;width:1px;height:16px;background:#404040;"></div>
<div style="left:339px;top:246px;width:1px;height:16px;background:#404040;"></div>
<div style="left:364px;top:246px;width:1px;height:16px;background:#404040;"></div>
<div style="left:390px;top:246px;width:1px;height:16px;background:#404040;"></div>
<div style="left:416px;top:246px;width:1px;height:16px;background:#404040;"></div>
<div style="left:441px;top:246px;width:1px;height:16px;background:#404040;"></div>
<div style="left:467px;top:246px;width:1px;height:16px;background:#404040;"></div>
<div style="left:493px;top:246px;width:1px;height:16px;background:#404040;"></div>
<div style="left:313px;top:262px;width:1px;height:16px;background:#404040;"></div>
<div style="left:339px;top:262px;width:1px;height:16px;background:#404040;"></div>
<div style="left:364px;top:262px;width:1px;height:16px;background:#404040;"></div>
<div style="left:390px;top:262px;width:1px;height:16px;background:#404040;"></div>
<div style="left:416px;top:262px;width:1px;height:16px;background:#404040;"></div>
<div style="left:441px;top:262px;width:1px;height:16px;background:#404040;"></div>
<div style="left:467px;top:262px;width:1px;height:16px;background:#404040;"></div>
<div style="left:313px;top:278px;width:1px;height:16px;background:#404040;"></div>
<div style="left:339px;top:278px;width:1px;height:16px;background:#404040;"></div>
<div style="left:364px;top:278px;width:1px;height:16px;background:#404040;"></div>
<div style="left:390px;top:278px;width:1px;height:16px;background:#404040;"></div>
<div style="left:416px;top:278px;width:1px;height:16px;background:#404040;"></div>
<div style="left:441px;top:278px;width:1px;height:16px;background:#404040;"></div>
<div style="left:467px;top:278px;width:1px;height:16px;background:#404040;"></div>
<div style="left:313px;top:294px;width:1px;height:15px;background:#404040;"></div>
<div style="left:339px;top:294px;width:1px;height:15px;background:#404040;"></div>
<div style="left:364px;top:294px;width:1px;height:15px;background:#404040;"></div>
<div style="left:390px;top:294px;width:1px;height:15px;background:#404040;"></div>
<div style="left:416px;top:294px;width:1px;height:15px;background:#404040;"></div>
<div style="left:441px;top:294px;width:1px;height:15px;background:#404040;"></div>
<div style="left:467px;top:294px;width:1px;height:15px;background:#404040;"></div>
<div style="left:313px;top:309px;width:1px;height:16px;background:#404040;"></div>
<div style="left:339px;top:309px;width:1px;height:16px;background:#404040;"></div>
<div style="left:364px;top:309px;width:1px;height:16px;background:#404040;"></div>
<div style="left:390px;top:309px;width:1px;height:16px;background:#404040;"></div>
<div style="left:416px;top:309px;width:1px;height:16px;background:#404040;"></div>
<div style="left:441px;top:309px;width:1px;height:16px;background:#404040;"></div>
<div style="left:467px;top:309px;width:1px;height:16px;background:#404040;"></div>
<div style="left:493px;top:309px;width:1px;height:16px;background:#404040;"></div>
<span style="left:279.08px;top:138.58px;font-size:11.6px;line-height:11.6px;color:#6e7681;font-family:'Liberation Mono', monospace;letter-spacing:-0.550px;">36</span>
<span style="left:441.80px;top:139.04px;font-size:11px;line-height:11px;color:#cccccc;font-family:'Liberation Mono', monospace;letter-spacing:-0.190px;"><span style="color:#6a9955">&lt;!-- Right Side Of Navbar --&gt;</span></span>
<span style="left:279.08px;top:154.41px;font-size:11.6px;line-height:11.6px;color:#6e7681;font-family:'Liberation Mono', monospace;letter-spacing:-0.550px;">37</span>
<span style="left:441.80px;top:154.87px;font-size:11px;line-height:11px;color:#cccccc;font-family:'Liberation Mono', monospace;letter-spacing:-0.190px;"><span style="color:#808080">&lt;</span><span style="color:#569cd6">ul</span><span style="color:#cccccc"> </span><span style="color:#9cdcfe">class</span><span style="color:#cccccc">=</span><span style="color:#ce9178">&quot;navbar-nav ms-auto&quot;</span><span style="color:#808080">&gt;</span></span>
<span style="left:279.08px;top:170.25px;font-size:11.6px;line-height:11.6px;color:#6e7681;font-family:'Liberation Mono', monospace;letter-spacing:-0.550px;">38</span>
<span style="left:467.44px;top:170.71px;font-size:11px;line-height:11px;color:#cccccc;font-family:'Liberation Mono', monospace;letter-spacing:-0.190px;"><span style="color:#6a9955">&lt;!-- Authentication Links --&gt;</span></span>
<span style="left:279.08px;top:186.08px;font-size:11.6px;line-height:11.6px;color:#6e7681;font-family:'Liberation Mono', monospace;letter-spacing:-0.550px;">39</span>
<span style="left:467.44px;top:186.54px;font-size:11px;line-height:11px;color:#cccccc;font-family:'Liberation Mono', monospace;letter-spacing:-0.190px;"><span style="color:#cccccc">@guest</span></span>
<span style="left:279.08px;top:201.91px;font-size:11.6px;line-height:11.6px;color:#6e7681;font-family:'Liberation Mono', monospace;letter-spacing:-0.550px;">40</span>
<span style="left:493.08px;top:202.37px;font-size:11px;line-height:11px;color:#cccccc;font-family:'Liberation Mono', monospace;letter-spacing:-0.190px;"><span style="color:#cccccc">@if (Route::has(&#x27;login&#x27;))</span></span>
<span style="left:279.08px;top:217.75px;font-size:11.6px;line-height:11.6px;color:#6e7681;font-family:'Liberation Mono', monospace;letter-spacing:-0.550px;">41</span>
<span style="left:518.72px;top:218.20px;font-size:11px;line-height:11px;color:#cccccc;font-family:'Liberation Mono', monospace;letter-spacing:-0.190px;"><span style="color:#808080">&lt;</span><span style="color:#569cd6">li</span><span style="color:#cccccc"> </span><span style="color:#9cdcfe">class</span><span style="color:#cccccc">=</span><span style="color:#ce9178">&quot;nav-item&quot;</span><span style="color:#808080">&gt;</span></span>
<span style="left:279.08px;top:233.58px;font-size:11.6px;line-height:11.6px;color:#6e7681;font-family:'Liberation Mono', monospace;letter-spacing:-0.550px;">42</span>
<span style="left:544.36px;top:234.04px;font-size:11px;line-height:11px;color:#cccccc;font-family:'Liberation Mono', monospace;letter-spacing:-0.190px;"><span style="color:#808080">&lt;</span><span style="color:#569cd6">a</span><span style="color:#cccccc"> </span><span style="color:#9cdcfe">class</span><span style="color:#cccccc">=</span><span style="color:#ce9178">&quot;nav-link&quot;</span><span style="color:#cccccc"> </span><span style="color:#9cdcfe">href</span><span style="color:#cccccc">=</span><span style="color:#ce9178">&quot;{{ route(&#x27;login&#x27;) }}&quot;</span><span style="color:#808080">&gt;</span><span style="color:#cccccc">{{ __(&#x27;Login&#x27;) }}</span><span style="color:#808080">&lt;/</span><span style="color:#569cd6">a</span><span style="color:#808080">&gt;</span></span>
<span style="left:279.08px;top:249.41px;font-size:11.6px;line-height:11.6px;color:#6e7681;font-family:'Liberation Mono', monospace;letter-spacing:-0.550px;">43</span>
<span style="left:518.72px;top:249.87px;font-size:11px;line-height:11px;color:#cccccc;font-family:'Liberation Mono', monospace;letter-spacing:-0.190px;"><span style="color:#808080">&lt;/</span><span style="color:#569cd6">li</span><span style="color:#808080">&gt;</span></span>
<span style="left:279.08px;top:265.24px;font-size:11.6px;line-height:11.6px;color:#6e7681;font-family:'Liberation Mono', monospace;letter-spacing:-0.550px;">44</span>
<span style="left:493.08px;top:265.70px;font-size:11px;line-height:11px;color:#cccccc;font-family:'Liberation Mono', monospace;letter-spacing:-0.190px;"><span style="color:#cccccc">@endif</span></span>
<span style="left:279.08px;top:281.08px;font-size:11.6px;line-height:11.6px;color:#6e7681;font-family:'Liberation Mono', monospace;letter-spacing:-0.550px;">45</span>
<span style="left:313.60px;top:281.54px;font-size:11px;line-height:11px;color:#cccccc;font-family:'Liberation Mono', monospace;letter-spacing:-0.190px;"></span>
<span style="left:279.08px;top:296.91px;font-size:11.6px;line-height:11.6px;color:#6e7681;font-family:'Liberation Mono', monospace;letter-spacing:-0.550px;">46</span>
<span style="left:493.08px;top:297.37px;font-size:11px;line-height:11px;color:#cccccc;font-family:'Liberation Mono', monospace;letter-spacing:-0.190px;"><span style="color:#cccccc">@if (Route::has(&#x27;register&#x27;))</span></span>
<span style="left:279.08px;top:312.74px;font-size:11.6px;line-height:11.6px;color:#6e7681;font-family:'Liberation Mono', monospace;letter-spacing:-0.550px;">47</span>
<span style="left:518.72px;top:313.20px;font-size:11px;line-height:11px;color:#cccccc;font-family:'Liberation Mono', monospace;letter-spacing:-0.190px;"><span style="color:#808080">&lt;</span><span style="color:#569cd6">li</span><span style="color:#cccccc"> </span><span style="color:#9cdcfe">class</span><span style="color:#cccccc">=</span><span style="color:#ce9178">&quot;nav-item&quot;</span><span style="color:#808080">&gt;</span></span>
<div style="left:257px;top:81px;width:1097px;height:65px;background:#1f1f1f;"></div>
<span style="left:279.08px;top:84.11px;font-size:11.6px;line-height:11.6px;color:#6e7681;font-family:'Liberation Mono', monospace;letter-spacing:-0.550px;">19</span>
<span style="left:313.60px;top:84.57px;font-size:11px;line-height:11px;color:#cccccc;font-family:'Liberation Mono', monospace;letter-spacing:-0.190px;"><span style="color:#808080">&lt;</span><span style="color:#569cd6">body</span><span style="color:#808080">&gt;</span></span>
<span style="left:279.08px;top:100.11px;font-size:11.6px;line-height:11.6px;color:#6e7681;font-family:'Liberation Mono', monospace;letter-spacing:-0.550px;">20</span>
<span style="left:339.24px;top:100.57px;font-size:11px;line-height:11px;color:#cccccc;font-family:'Liberation Mono', monospace;letter-spacing:-0.190px;"><span style="color:#808080">&lt;</span><span style="color:#569cd6">div</span><span style="color:#cccccc"> </span><span style="color:#9cdcfe">id</span><span style="color:#cccccc">=</span><span style="color:#ce9178">&quot;app&quot;</span><span style="color:#808080">&gt;</span></span>
<span style="left:279.08px;top:116.11px;font-size:11.6px;line-height:11.6px;color:#6e7681;font-family:'Liberation Mono', monospace;letter-spacing:-0.550px;">21</span>
<span style="left:364.88px;top:116.57px;font-size:11px;line-height:11px;color:#cccccc;font-family:'Liberation Mono', monospace;letter-spacing:-0.190px;"><span style="color:#808080">&lt;</span><span style="color:#569cd6">nav</span><span style="color:#cccccc"> </span><span style="color:#9cdcfe">class</span><span style="color:#cccccc">=</span><span style="color:#ce9178">&quot;navbar navbar-expand-md navbar-light bg-white shadow-sm&quot;</span><span style="color:#808080">&gt;</span></span>
<span style="left:279.08px;top:132.11px;font-size:11.6px;line-height:11.6px;color:#6e7681;font-family:'Liberation Mono', monospace;letter-spacing:-0.550px;">22</span>
<span style="left:390.52px;top:132.57px;font-size:11px;line-height:11px;color:#cccccc;font-family:'Liberation Mono', monospace;letter-spacing:-0.190px;"><span style="color:#808080">&lt;</span><span style="color:#569cd6">div</span><span style="color:#cccccc"> </span><span style="color:#9cdcfe">class</span><span style="color:#cccccc">=</span><span style="color:#ce9178">&quot;container&quot;</span><span style="color:#808080">&gt;</span></span>
<div style="left:257px;top:146px;width:1096px;height:1px;background:#000000;"></div>
<div style="left:257px;top:147px;width:1096px;height:1px;background:rgba(0,0,0,0.65);"></div>
<div style="left:257px;top:148px;width:1096px;height:1px;background:rgba(0,0,0,0.2);"></div>
<div style="left:1354px;top:82px;width:12px;height:1px;background:#0c0c0c;"></div>
<div style="left:1354px;top:82px;width:1px;height:236px;background:#0c0c0c;"></div>
<div style="left:1355px;top:213px;width:11px;height:2px;background:#6a6a6a;"></div>
<div style="left:257px;top:318px;width:1109px;height:430px;background:#181818;"></div>
<div style="left:257px;top:318px;width:1109px;height:1px;background:#2b2b2b;"></div>
<span style="left:273.60px;top:328.37px;font-size:9.6px;line-height:9.6px;color:#9d9d9d;font-family:'Liberation Sans', sans-serif;letter-spacing:0.000px;transform:scaleX(0.8410);transform-origin:0 0;">PROBLEMS</span>
<span style="left:338.00px;top:328.37px;font-size:9.6px;line-height:9.6px;color:#9d9d9d;font-family:'Liberation Sans', sans-serif;letter-spacing:0.000px;transform:scaleX(0.8666);transform-origin:0 0;">OUTPUT</span>
<span style="left:392.70px;top:328.37px;font-size:9.6px;line-height:9.6px;color:#9d9d9d;font-family:'Liberation Sans', sans-serif;letter-spacing:0.000px;transform:scaleX(0.8476);transform-origin:0 0;">DEBUG CONSOLE</span>
<span style="left:483.80px;top:328.37px;font-size:9.6px;line-height:9.6px;color:#e7e7e7;font-family:'Liberation Sans', sans-serif;letter-spacing:0.000px;transform:scaleX(0.8582);transform-origin:0 0;">TERMINAL</span>
<span style="left:545.90px;top:328.37px;font-size:9.6px;line-height:9.6px;color:#9d9d9d;font-family:'Liberation Sans', sans-serif;letter-spacing:0.000px;transform:scaleX(0.8129);transform-origin:0 0;">PORTS</span>
<div style="left:482px;top:342px;width:46px;height:1px;background:#0078d4;"></div>
<svg style="left:1128px;top:327px;" width="13" height="13" viewBox="0 0 13 13" fill="none"><rect x="0.6" y="0.6" width="11.8" height="11.8" rx="1.2" stroke="#cccccc" stroke-width="1.1"/><path d="M3 3.5 L5.8 6 L3 8.5 M6.5 9.5 H10" stroke="#cccccc" stroke-width="1.1"/></svg>
<span style="left:1144.40px;top:328.29px;font-size:11px;line-height:11px;color:#cccccc;font-family:'Liberation Sans', sans-serif;letter-spacing:0.000px;transform:scaleX(0.8222);transform-origin:0 0;">bash - laravel-sisfo</span>
<svg style="left:1227px;top:328px;" width="12" height="12" viewBox="0 0 12 12" fill="none"><path d="M6 0 V12 M0 6 H12" stroke="#cccccc" stroke-width="1.3"/></svg>
<svg style="left:1243px;top:331px;" width="7" height="5" viewBox="0 0 7 5" fill="none"><path d="M0.6 0.8 L3.5 4 L6.4 0.8" stroke="#cccccc" stroke-width="1"/></svg>
<svg style="left:1258px;top:328px;" width="12" height="12" viewBox="0 0 12 12" fill="none"><rect x="0.6" y="0.6" width="10.8" height="10.8" rx="1.2" stroke="#cccccc" stroke-width="1.1"/><path d="M6 1 V11" stroke="#cccccc" stroke-width="1.1"/></svg>
<svg style="left:1278px;top:327px;" width="11" height="13" viewBox="0 0 11 13" fill="none"><path d="M0.5 2.5 H10.5 M4 2.5 V1 H7 V2.5" stroke="#cccccc" stroke-width="1"/><path d="M1.8 3 L2.4 12.2 H8.6 L9.2 3" stroke="#cccccc" stroke-width="1"/><path d="M4.2 4.5 V10.5 M6.8 4.5 V10.5" stroke="#cccccc" stroke-width="1"/></svg>
<div style="left:1299.0px;top:332.5px;width:2px;height:2px;background:#cccccc;border-radius:50%;"></div>
<div style="left:1303.2px;top:332.5px;width:2px;height:2px;background:#cccccc;border-radius:50%;"></div>
<div style="left:1307.4px;top:332.5px;width:2px;height:2px;background:#cccccc;border-radius:50%;"></div>
<svg style="left:1320px;top:330px;" width="10" height="7" viewBox="0 0 10 7" fill="none"><path d="M0.8 5.8 L5 1.2 L9.2 5.8" stroke="#cccccc" stroke-width="1.1"/></svg>
<svg style="left:1342px;top:329px;" width="9" height="9" viewBox="0 0 9 9" fill="none"><path d="M0.8 1 L8.2 8.2 M8.2 1 L0.8 8.2" stroke="#cccccc" stroke-width="1.1"/></svg>
<span style="left:273.60px;top:377.34px;font-size:10px;line-height:10px;color:#cccccc;font-family:'Liberation Mono', monospace;letter-spacing:0.000px;"><span style="color:#0dbc79">hp@DESKTOP-C1KCF13</span><span style="color:#cccccc"> </span><span style="color:#bc3fbc">MINGW64</span><span style="color:#cccccc"> </span><span style="color:#e5e510">/d/Larafel/laravel-sisfo</span></span>
<span style="left:273.60px;top:392.34px;font-size:10px;line-height:10px;color:#cccccc;font-family:'Liberation Mono', monospace;letter-spacing:0.000px;">$ php artisan make:migration costum_table_users</span>
<div style="left:555px;top:387px;width:6px;height:15px;background:#cccccc;"></div>
<svg style="left:261px;top:390px;" width="9" height="9" viewBox="0 0 9 9" fill="none"><circle cx="4.5" cy="4.6" r="2.7" stroke="#666666" stroke-width="1.7"/></svg>
<div style="left:1354px;top:357px;width:12px;height:1px;background:#050505;"></div>
<div style="left:1354px;top:357px;width:1px;height:391px;background:#050505;"></div>
<div style="left:1355px;top:384px;width:3px;height:6px;background:#6a6a6a;"></div>
<div style="left:0px;top:747px;width:1366px;height:1px;background:#1f1f1f;"></div>
<div style="left:0px;top:748px;width:1366px;height:1px;background:#2b2b2b;"></div>
<div style="left:0px;top:749px;width:1366px;height:17px;background:#181818;"></div>
<div style="left:0px;top:766px;width:1366px;height:2px;background:#000000;"></div>
<div style="left:0px;top:749px;width:28px;height:17px;background:#0078d4;"></div>
<svg style="left:9px;top:750px;" width="11" height="12" viewBox="0 0 11 12" fill="none"><path d="M1.2 4 L5.6 7.5 L1.2 11 M9.2 1 L5.6 4.6 L9.2 8" stroke="#ffffff" stroke-width="1.1"/></svg>
<svg style="left:35px;top:750px;" width="12" height="12" viewBox="0 0 12 12" fill="none"><circle cx="6" cy="6" r="5.2" stroke="#cccccc" stroke-width="1"/><path d="M3.8 3.8 L8.2 8.2 M8.2 3.8 L3.8 8.2" stroke="#cccccc" stroke-width="1"/></svg>
<span style="left:49.70px;top:753.03px;font-size:10px;line-height:10px;color:#cccccc;font-family:'Liberation Sans', sans-serif;letter-spacing:0.000px;">0</span>
<svg style="left:58px;top:750px;" width="11" height="11" viewBox="0 0 11 11" fill="none"><path d="M5.5 0.8 L10.4 10.2 H0.6 Z" stroke="#cccccc" stroke-width="1" stroke-linejoin="round"/><path d="M5.5 4 V7.2 M5.5 8.2 V9" stroke="#cccccc" stroke-width="1"/></svg>
<span style="left:71.70px;top:753.03px;font-size:10px;line-height:10px;color:#cccccc;font-family:'Liberation Sans', sans-serif;letter-spacing:0.000px;">0</span>
<span style="left:90.70px;top:753.03px;font-size:10px;line-height:10px;color:#cccccc;font-family:'Liberation Sans', sans-serif;letter-spacing:0.000px;transform:scaleX(0.8112);transform-origin:0 0;">SFTP</span>
<span style="left:1038.30px;top:753.03px;font-size:10px;line-height:10px;color:#cccccc;font-family:'Liberation Sans', sans-serif;letter-spacing:0.000px;transform:scaleX(0.9478);transform-origin:0 0;">Ln 54, Col 59</span>
<span style="left:1108.50px;top:753.03px;font-size:10px;line-height:10px;color:#cccccc;font-family:'Liberation Sans', sans-serif;letter-spacing:0.000px;transform:scaleX(0.8951);transform-origin:0 0;">Spaces: 4</span>
<span style="left:1162.10px;top:753.03px;font-size:10px;line-height:10px;color:#cccccc;font-family:'Liberation Sans', sans-serif;letter-spacing:0.000px;transform:scaleX(0.9142);transform-origin:0 0;">UTF-8</span>
<span style="left:1201.50px;top:753.03px;font-size:10px;line-height:10px;color:#cccccc;font-family:'Liberation Sans', sans-serif;letter-spacing:0.000px;transform:scaleX(0.8822);transform-origin:0 0;">LF</span>
<span style="left:1225.10px;top:753.03px;font-size:10px;line-height:10px;color:#cccccc;font-family:'Liberation Sans', sans-serif;letter-spacing:0.000px;transform:scaleX(0.8712);transform-origin:0 0;">PHP</span>
<span style="left:1295.50px;top:753.03px;font-size:10px;line-height:10px;color:#cccccc;font-family:'Liberation Sans', sans-serif;letter-spacing:0.000px;transform:scaleX(0.9369);transform-origin:0 0;">Go Live</span>
<svg style="left:1256px;top:750px;" width="13" height="11" viewBox="0 0 19 16" fill="none"><ellipse cx="6.3" cy="4.1" rx="3.4" ry="3.3" fill="#cccccc"/><ellipse cx="12.85" cy="4.1" rx="3.4" ry="3.3" fill="#cccccc"/><rect x="1.1" y="6.4" width="16.9" height="8.4" rx="5.5" ry="4.2" fill="#cccccc"/><rect x="5.1" y="2.9" width="2.8" height="2.8" rx="0.8" fill="#181818"/><rect x="10.9" y="2.9" width="2.8" height="2.8" rx="0.8" fill="#181818"/><rect x="5.1" y="8.4" width="8.8" height="3.9" rx="1.2" fill="#181818"/><rect x="7.1" y="8.7" width="1.4" height="3.1" fill="#cccccc"/><rect x="10.1" y="8.7" width="1.4" height="3.1" fill="#cccccc"/></svg>
<svg style="left:1282px;top:750px;" width="11" height="12" viewBox="0 0 11 12" fill="none"><circle cx="5.5" cy="5" r="1.3" fill="#cccccc"/><path d="M5.5 6.3 V11.5" stroke="#cccccc" stroke-width="1.1"/><path d="M3 7.5 A3.5 3.5 0 1 1 8 7.5 M1.5 9 A5.5 5.5 0 1 1 9.5 9" stroke="#cccccc" stroke-width="1"/></svg>
<svg style="left:1343px;top:750px;" width="11" height="12" viewBox="0 0 11 12" fill="none"><path d="M5.5 1 C3 1 2 3 2 5 V8 L0.8 9.5 H10.2 L9 8 V5 C9 3 8 1 5.5 1 Z" stroke="#cccccc" stroke-width="1"/><path d="M4 10.8 H7" stroke="#cccccc" stroke-width="1"/></svg>
</body></html>
